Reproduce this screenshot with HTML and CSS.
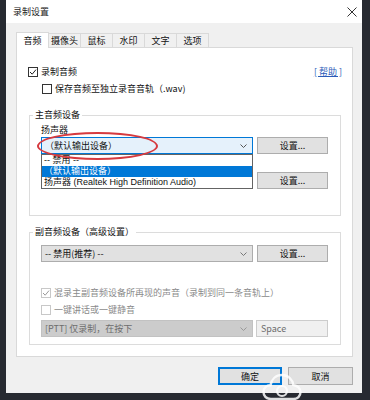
FILE: index.html
```html
<!DOCTYPE html>
<html lang="zh-CN">
<head>
    <meta charset="UTF-8">
    <title>录制设置</title>
    <link rel="stylesheet" href="styles.css">
</head>
<body>
    <div class="screen">
        <div class="dialog">
            <!-- Title bar -->
            <div class="titlebar">
                <span class="title">录制设置</span>
                <svg class="close" width="10" height="10" viewBox="0 0 10 10">
                    <path d="M0.5 0.5L9.5 9.5M9.5 0.5L0.5 9.5" stroke="#333" stroke-width="1"/>
                </svg>
            </div>

            <!-- Tabs -->
            <div class="tabs">
                <span class="tab active">音频</span>
                <span class="tab">摄像头</span>
                <span class="tab">鼠标</span>
                <span class="tab">水印</span>
                <span class="tab">文字</span>
                <span class="tab">选项</span>
            </div>

            <div class="panel">
                <div class="row top-row">
                    <label class="check">
                        <span class="box">
                            <svg width="8" height="8" viewBox="0 0 8 8"><path d="M1 4L3.2 6.2L7 1.6" fill="none" stroke="#222" stroke-width="1"/></svg>
                        </span>
                        录制音频
                    </label>
                    <a class="help">[ 帮助 ]</a>
                </div>
                <div class="row sub-row">
                    <label class="check"><span class="box"></span>保存音频至独立录音音轨（.wav)</label>
                </div>

                <!-- Main audio device -->
                <fieldset class="group group-main">
                    <legend>主音频设备</legend>
                    <div class="field-label">扬声器</div>
                    <div class="device-row">
                        <div class="combo focused">
                            <span>（默认输出设备）</span>
                            <svg class="chevron" width="7" height="4" viewBox="0 0 7 4"><path d="M0.5 0.5L3.5 3.5L6.5 0.5" fill="none" stroke="#555" stroke-width="1"/></svg>
                        </div>
                        <button class="btn-small">设置...</button>
                        <ul class="dropdown">
                            <li>-- 禁用 --</li>
                            <li class="selected">（默认输出设备）</li>
                            <li>扬声器 (Realtek High Definition Audio)</li>
                        </ul>
                        <div class="marker"></div>
                    </div>
                    <div class="device-row second">
                        <div class="combo"><span></span></div>
                        <button class="btn-small">设置...</button>
                    </div>
                </fieldset>

                <!-- Secondary audio device -->
                <fieldset class="group group-sub">
                    <legend>副音频设备（高级设置）</legend>
                    <div class="device-row">
                        <div class="combo">
                            <span>-- 禁用(推荐) --</span>
                            <svg class="chevron" width="7" height="4" viewBox="0 0 7 4"><path d="M0.5 0.5L3.5 3.5L6.5 0.5" fill="none" stroke="#777" stroke-width="1"/></svg>
                        </div>
                        <button class="btn-small">设置...</button>
                    </div>
                    <div class="row mix-row">
                        <label class="check disabled">
                            <span class="box">
                                <svg width="8" height="8" viewBox="0 0 8 8"><path d="M1 4L3.2 6.2L7 1.6" fill="none" stroke="#9a9a9a" stroke-width="1"/></svg>
                            </span>
                            混录主副音频设备所再现的声音（录制到同一条音轨上）
                        </label>
                    </div>
                    <div class="row">
                        <label class="check disabled"><span class="box"></span>一键讲话或一键静音</label>
                    </div>
                    <div class="device-row ptt-row">
                        <div class="combo disabled">
                            <span>[PTT] 仅录制，在按下</span>
                            <svg class="chevron" width="7" height="4" viewBox="0 0 7 4"><path d="M0.5 0.5L3.5 3.5L6.5 0.5" fill="none" stroke="#999" stroke-width="1"/></svg>
                        </div>
                        <div class="key-box">Space</div>
                    </div>
                </fieldset>
            </div>

            <div class="footer">
                <button class="btn default">确定</button>
                <button class="btn">取消</button>
            </div>
        </div>

        <!-- Site watermark over the corner -->
        <svg class="watermark" width="40" height="32" viewBox="0 0 40 32">
            <path d="M9 30C4 30 1.5 26.5 1.5 23C1.5 19 4.5 16.2 8.5 16.2C9.5 10 14 6 20 6C26 6 30.5 10.2 31.3 16C35.5 16.5 38.5 19.6 38.5 23.3C38.5 27 35.5 30 31.5 30Z" fill="none" stroke="#fff" stroke-width="2.4"/>
            <circle cx="20" cy="22" r="5" fill="none" stroke="#fff" stroke-width="2.2"/>
        </svg>
    </div>
</body>
</html>
```

FILE: styles.css
```css
* {
    box-sizing: border-box;
}

body {
    margin: 0;
    width: 370px;
    height: 400px;
    overflow: hidden;
    background: #272a31;
    font-family: "Noto Sans CJK SC", "Noto Sans", sans-serif;
    font-size: 9px;
    color: #111;
}

.screen {
    position: relative;
    display: flex;
    padding-left: 6px;
}

.dialog {
    width: 356px;
    height: 393px;
    background: #f0f0f0;
    display: flex;
    flex-direction: column;
}

/* Title bar */
.titlebar {
    height: 23px;
    background: #fff;
    display: flex;
    align-items: center;
    justify-content: space-between;
    padding: 0 5px 0 7px;
}

.title {
    font-size: 9px;
    color: #222;
}

/* Tabs */
.tabs {
    display: flex;
    align-items: flex-end;
    height: 15px;
    margin: 9px 0 0 10px;
}

.tab {
    width: 33px;
    height: 14px;
    line-height: 13px;
    text-align: center;
    background: #f0f0f0;
    border: 1px solid #d9d9d9;
    border-bottom: none;
    margin-right: -1px;
}

.tab.active {
    height: 16px;
    line-height: 15px;
    background: #fff;
    margin-bottom: -1px;
    position: relative;
    z-index: 1;
}

/* Tab page */
.panel {
    height: 310px;
    margin: 0 9px 0 10px;
    background: #fff;
    border: 1px solid #d9d9d9;
    padding-top: 15px;
}

.row {
    height: 17px;
    display: flex;
    align-items: center;
}

.top-row {
    justify-content: space-between;
    padding: 0 10px 0 11px;
}

.sub-row {
    padding-left: 25px;
}

.check {
    display: flex;
    align-items: center;
    white-space: nowrap;
}

.box {
    width: 10px;
    height: 10px;
    border: 1px solid #333;
    background: #fff;
    margin-right: 3px;
    display: flex;
    align-items: center;
    justify-content: center;
}

.check.disabled {
    color: #8a8a8a;
}

.check.disabled .box {
    border-color: #c8c8c8;
}

.help {
    color: #2a5bb8;
    text-decoration: underline;
}

/* Group boxes */
.group {
    margin: 12px 11px 0 12px;
    border: 1px solid #dcdcdc;
    padding: 2px 0 26px 11px;
    min-width: 0;
}

.group legend {
    line-height: 12px;
    padding: 0 2px;
    margin-left: -8px;
}

.group-sub {
    margin-top: 10px;
    padding: 7px 0 7px 11px;
}

.field-label {
    height: 14px;
    line-height: 14px;
}

.device-row {
    position: relative;
    display: flex;
    gap: 4px;
    height: 17px;
}

.device-row.second {
    margin-top: 18px;
}

.combo {
    width: 212px;
    height: 17px;
    border: 1px solid #adadad;
    background: #e1e1e1;
    display: flex;
    align-items: center;
    justify-content: space-between;
    padding: 0 5px 0 3px;
    white-space: nowrap;
}

.combo.focused {
    background: #e5f1fb;
    border-color: #0078d7;
}

.combo.disabled {
    background: #cccccc;
    border-color: #c2c2c2;
    color: #6d6d6d;
}

.btn-small {
    width: 71px;
    height: 17px;
    border: 1px solid #adadad;
    background: #e1e1e1;
    font: inherit;
    color: #111;
    padding: 0;
}

/* Opened list of the speaker combo */
.dropdown {
    position: absolute;
    top: 17px;
    left: 0;
    width: 212px;
    margin: 0;
    padding: 0;
    list-style: none;
    background: #fff;
    border: 1px solid #646464;
    z-index: 2;
    font-family: "Liberation Sans", "Noto Sans CJK SC", sans-serif;
}

.dropdown li {
    height: 11px;
    line-height: 11px;
    padding-left: 2px;
    white-space: nowrap;
}

.dropdown li.selected {
    background: #0078d7;
    color: #fff;
}

/* Red annotation ring */
.marker {
    position: absolute;
    left: -4px;
    top: -5px;
    width: 121px;
    height: 28px;
    border: 2px solid #d63a3f;
    border-radius: 50%;
    z-index: 3;
}

.mix-row {
    margin-top: 22px;
}

.ptt-row {
    gap: 3px;
    margin-top: 2px;
}

.key-box {
    width: 72px;
    height: 17px;
    border: 1px solid #cccccc;
    background: #f0f0f0;
    color: #6d6d6d;
    padding-left: 4px;
    line-height: 15px;
}

/* Dialog buttons */
.footer {
    display: flex;
    justify-content: flex-end;
    gap: 6px;
    margin: 10px 9px 0 0;
}

.btn {
    width: 65px;
    height: 18px;
    border: 1px solid #adadad;
    background: #e1e1e1;
    font: inherit;
    color: #111;
    padding: 0;
}

.btn.default {
    width: 64px;
    border-color: #0078d7;
    box-shadow: inset 0 0 0 1px #0078d7;
}

.watermark {
    position: absolute;
    left: 262px;
    top: 369px;
    opacity: 0.85;
}
```
